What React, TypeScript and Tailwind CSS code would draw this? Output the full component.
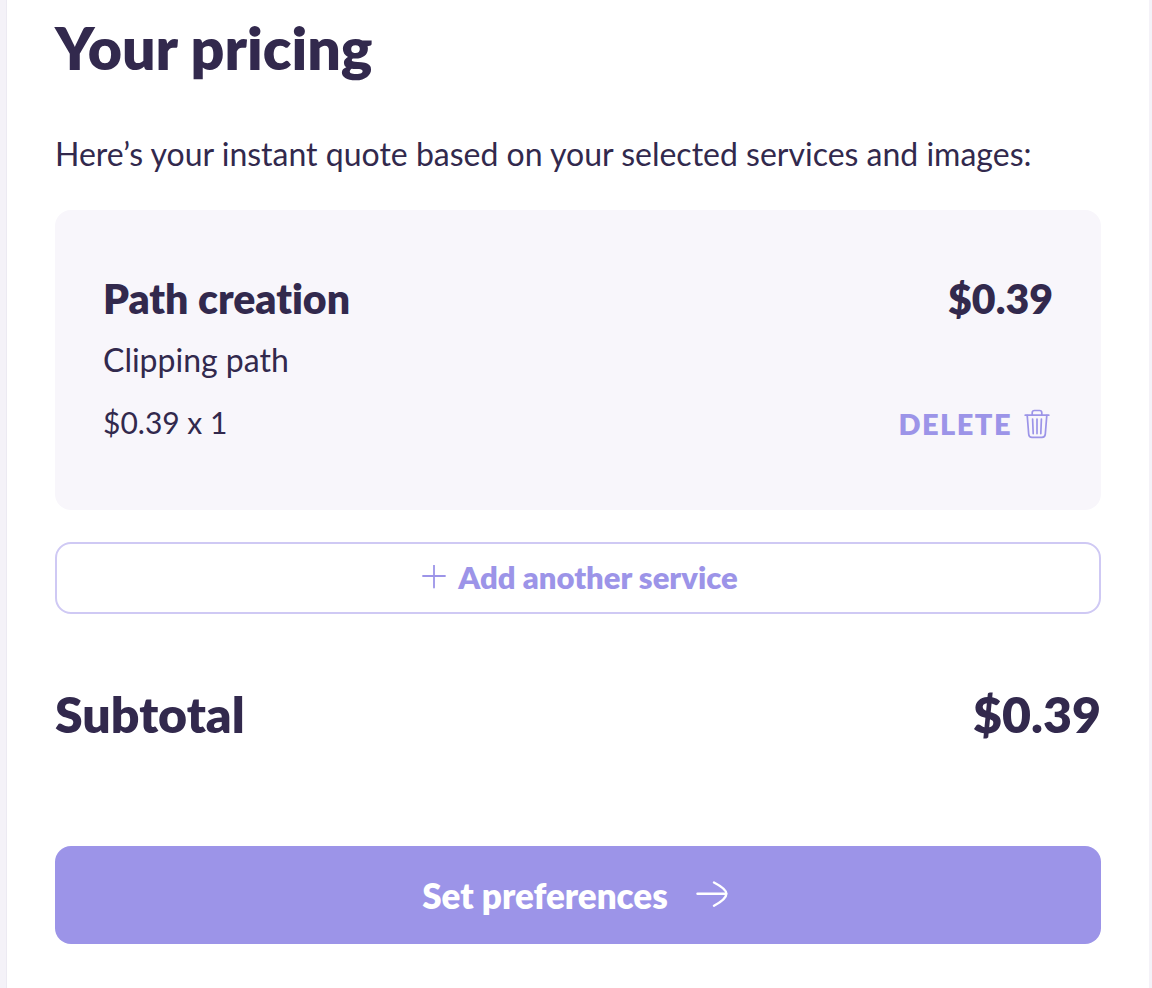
function TrashIcon() {
  return (
    <svg aria-hidden="true" viewBox="0 0 26 30" className="h-[30px] w-[26px]" fill="none" stroke="currentColor" strokeWidth="1.7" strokeLinecap="round" strokeLinejoin="round">
      <path d="M1.2 6.2H24.8" />
      <path d="M8.2 6V3.8Q8.2 1.5 10.5 1.5H15.5Q17.8 1.5 17.8 3.8V6" />
      <path d="M3.2 6.4L4.7 25.2Q5 28.3 8 28.3H18Q21 28.3 21.3 25.2L22.8 6.4" />
      <path d="M8.6 10L9.2 24.6M13 10V24.6M17.4 10L16.8 24.6" />
    </svg>
  );
}

function PlusIcon() {
  return (
    <svg aria-hidden="true" viewBox="0 0 24 24" className="size-6" fill="none" stroke="currentColor" strokeWidth="1.8" strokeLinecap="round">
      <path d="M1 11H23M12 0.5V22.5" />
    </svg>
  );
}

function ArrowIcon() {
  return (
    <svg aria-hidden="true" viewBox="0 0 32 28" className="h-7 w-8" fill="none" stroke="currentColor" strokeWidth="2.4" strokeLinecap="round" strokeLinejoin="round">
      <path d="M1.5 12.8H30" />
      <path d="M18 1.5C24 4.6 30.4 9 30.4 12.8C30.4 17 24 21.6 18 24.8" />
    </svg>
  );
}

export default function App() {
  return (
    <div className="min-h-screen bg-[#f4f2f8] pr-[3px] pl-1.5 font-['Lato',sans-serif] text-[#32294d] [font-variant-ligatures:none]">
      <main className="min-h-screen border-l border-[#eceaf2] bg-white px-12 pt-3.5 pb-11">
        <h1 className="text-[59px] leading-[68px] font-extrabold">Your pricing</h1>
        <p className="mt-[50px] text-[32px] leading-[44px]">
          Here’s your instant quote based on your selected services and images:
        </p>

        <section aria-label="Selected service" className="mt-[34px] rounded-2xl bg-[#f8f6fb] px-12 pt-[62px] pb-16">
          <div className="flex items-center justify-between text-[41px] leading-[54px] font-extrabold">
            <h2>Path creation</h2>
            <span>$0.39</span>
          </div>
          <p className="mt-3 text-[32px] leading-[44px]">Clipping path</p>
          <div className="mt-4 flex items-center justify-between">
            <span className="text-[30px] leading-[48px]">$0.39 x 1</span>
            <button type="button" className="flex items-center gap-3 pt-1 pr-[3px] text-[29px] leading-10 font-extrabold tracking-wider text-[#9c94e8]">
              DELETE
              <TrashIcon />
            </button>
          </div>
        </section>

        <button type="button" className="mt-8 flex h-[72px] w-full items-center justify-center gap-3 rounded-2xl border-2 border-[#cfc9f4] pb-0.5 pl-1 text-[31px] font-extrabold text-[#9c94e8]">
          <PlusIcon />
          Add another service
        </button>

        <div className="mt-[68px] flex items-center justify-between text-[50px] leading-[64px] font-extrabold">
          <h2>Subtotal</h2>
          <span>$0.39</span>
        </div>

        <button type="button" className="mt-[100px] flex h-[98px] w-full items-center justify-center gap-7 rounded-2xl bg-[#9c94e8] pr-1.5 text-[35px] font-extrabold text-white">
          Set preferences
          <ArrowIcon />
        </button>
      </main>
    </div>
  );
}
